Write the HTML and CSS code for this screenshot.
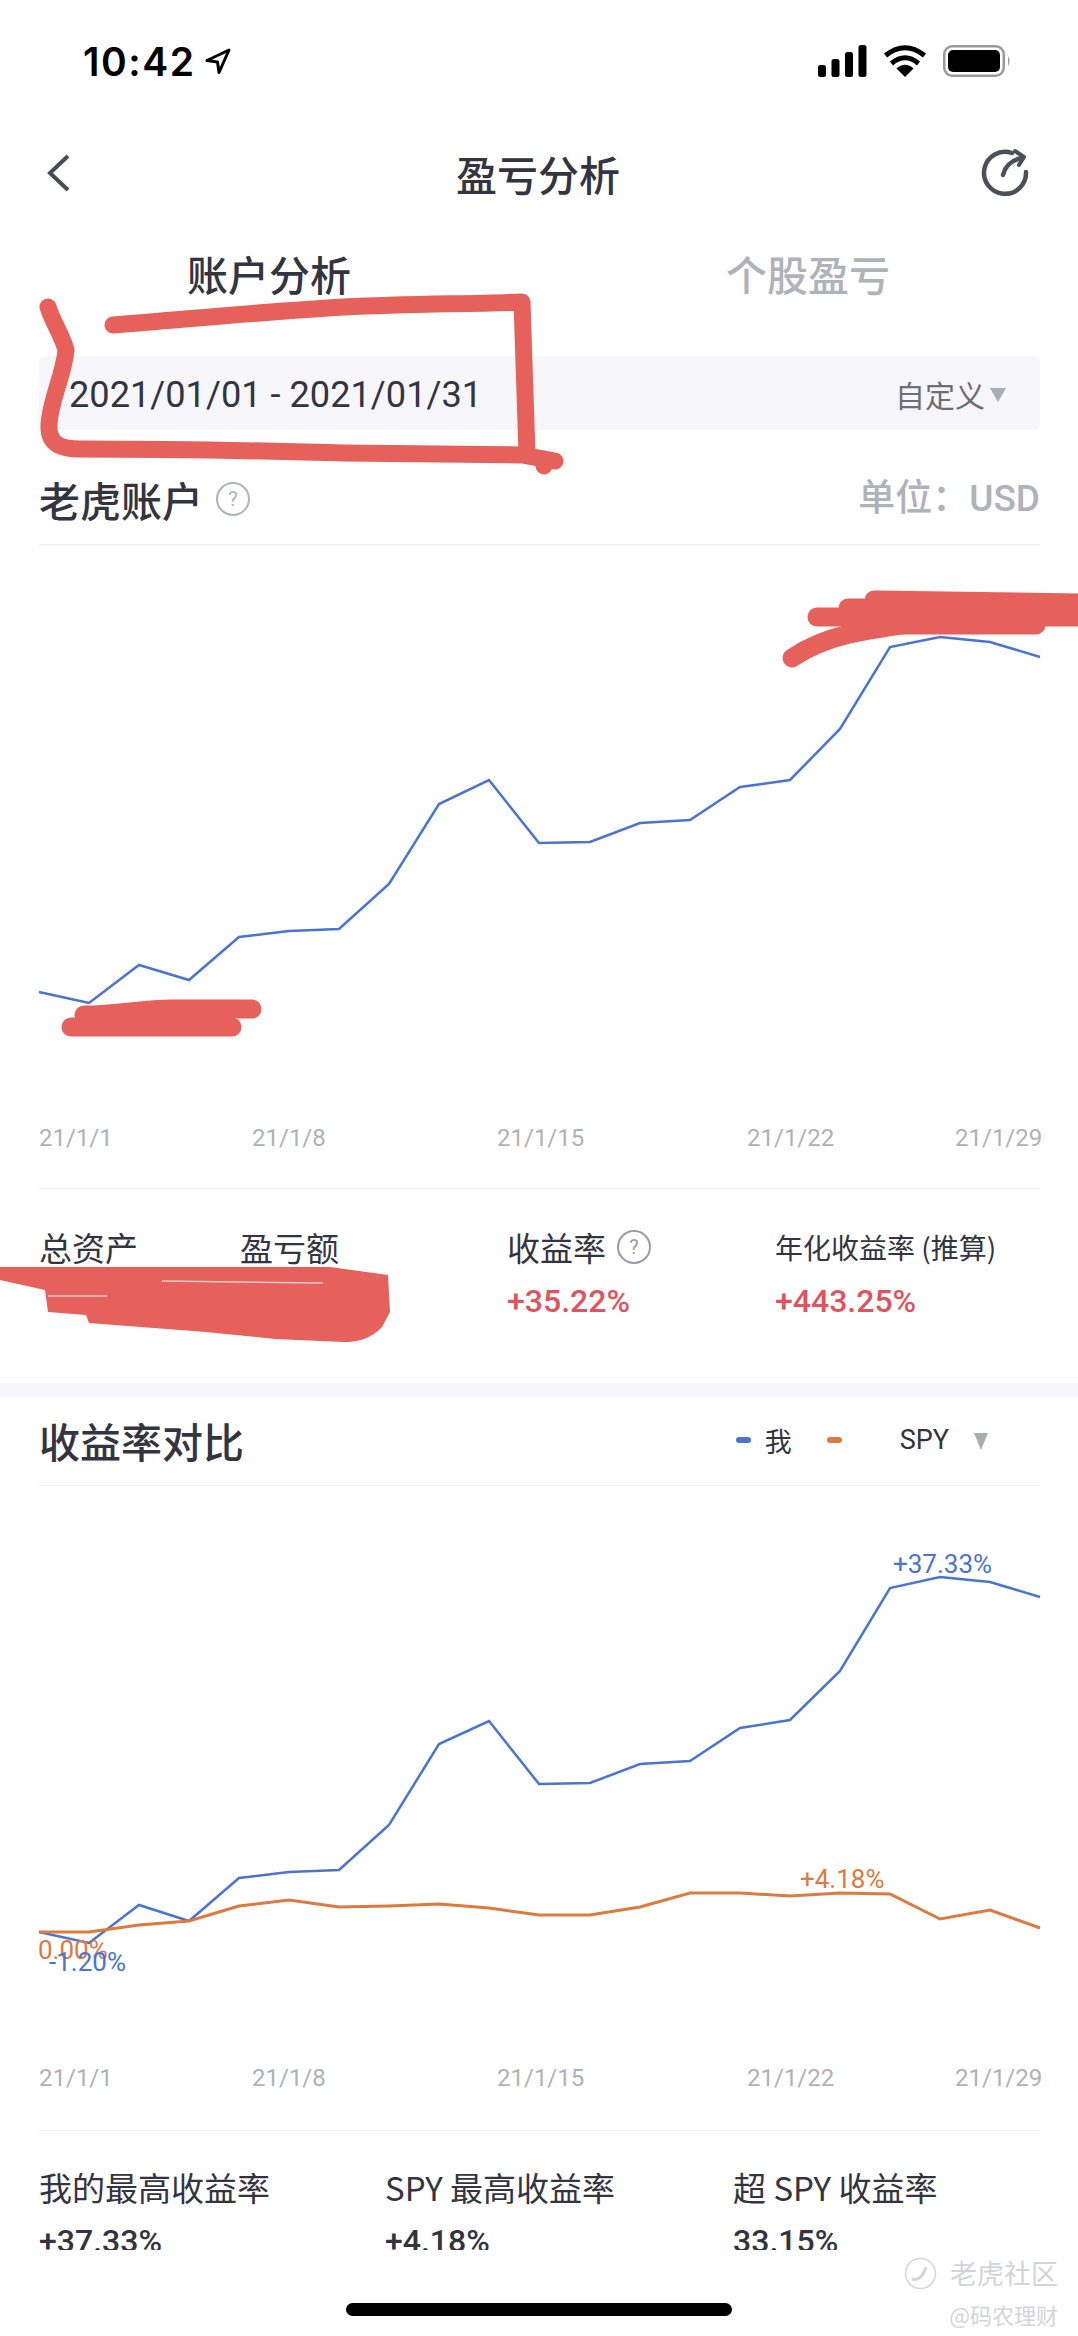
FILE: index.html
```html
<!DOCTYPE html>
<html lang="zh">
<head>
  <meta charset="UTF-8" />
  <title>盈亏分析</title>
  <link rel="stylesheet" href="styles.css">
</head>
<body>
<div class="phone">

  <!-- Status bar -->
  <div class="status">
    <div class="clock">
      <span class="time">10:42</span>
      <svg class="loc" width="28" height="28" viewBox="0 0 28 28"><path d="M25 3 3 13.500l10.500 1.500 1.500 10.500z" fill="none" stroke="#000" stroke-width="3" stroke-linejoin="round"/></svg>
    </div>
    <div class="status-icons">
      <svg width="49" height="32" viewBox="0 0 49 32"><rect x="0" y="20" width="8" height="12" rx="2.500"/><rect x="13.500" y="14" width="8" height="18" rx="2.500"/><rect x="27" y="7" width="8" height="25" rx="2.500"/><rect x="40.500" y="0" width="8" height="32" rx="2.500"/></svg>
      <svg width="44" height="32" viewBox="0 0 44 32"><path d="M22 32 13.500 23.500Q22 16 30.500 23.500z"/><path d="M8.500 18.500Q22 7 35.500 18.500" fill="none" stroke="#000" stroke-width="5"/><path d="M2.500 10.500Q22 -5 41.500 10.500" fill="none" stroke="#000" stroke-width="5"/></svg>
      <svg width="68" height="32" viewBox="0 0 68 32"><rect x="1.250" y="1.250" width="59.500" height="29.500" rx="8" fill="#fff" stroke="#9a9a9a" stroke-width="2.500"/><rect x="5" y="5" width="52" height="22" rx="5"/><path d="M65 11q3 5 0 10z" fill="#9a9a9a"/></svg>
    </div>
  </div>

  <!-- Navigation -->
  <div class="nav">
    <svg class="nav-back" width="26" height="38" viewBox="0 0 26 38"><path d="M22 2 4 19l18 17" fill="none" stroke="#4a4b57" stroke-width="4"/></svg>
    <div class="nav-title">盈亏分析</div>
    <svg class="nav-share" width="50" height="50" viewBox="0 0 50 50"><path d="M32 5A21 21 0 1 0 46 24" fill="none" stroke="#4d4e5a" stroke-width="4.500" stroke-linecap="round"/><path d="M23 27Q26 14 41 10" fill="none" stroke="#4d4e5a" stroke-width="4.500" stroke-linecap="round"/><path d="M35 3 44 9 39 17" fill="none" stroke="#4d4e5a" stroke-width="4" stroke-linejoin="round" stroke-linecap="round"/></svg>
  </div>

  <!-- Tabs -->
  <div class="tabs">
    <div class="tab tab-on">账户分析</div>
    <div class="tab">个股盈亏</div>
  </div>

  <div class="date-bar">
    <span class="date-range">2021/01/01 - 2021/01/31</span>
    <span class="date-type">自定义<i class="tri"></i></span>
  </div>

  <!-- Account section -->
  <div class="head">
    <div class="head-left">老虎账户<span class="help">?</span></div>
    <div class="unit">单位：USD</div>
  </div>

  <svg class="chart chart-one" viewBox="0 545 1078 643">
    <polyline class="line-blue" points="39,992 89,1003 139,965 189,980 239,937 289,931 339,929 389,884 439,804 489,780 539,843 590,842 640,823 690,820 740,787 790,780 840,729 890,647 940,637 990,642 1040,657"/>
    <text class="tick" x="39" y="1146">21/1/1</text>
    <text class="tick" x="252" y="1146">21/1/8</text>
    <text class="tick" x="497" y="1146">21/1/15</text>
    <text class="tick" x="747" y="1146">21/1/22</text>
    <text class="tick" x="955" y="1146">21/1/29</text>
  </svg>

  <div class="stats rule">
    <div class="stat">
      <div class="stat-label">总资产</div>
    </div>
    <div class="stat">
      <div class="stat-label">盈亏额</div>
    </div>
    <div class="stat">
      <div class="stat-label">收益率<span class="help help-dark">?</span></div>
      <div class="stat-value">+35.22%</div>
    </div>
    <div class="stat">
      <div class="stat-label stat-small">年化收益率 (推算)</div>
      <div class="stat-value">+443.25%</div>
    </div>
  </div>

  <div class="band"></div>

  <!-- Comparison section -->
  <div class="head head-two">
    <div class="head-left">收益率对比</div>
    <div class="legend">
      <i class="dash dash-blue"></i><span class="me">我</span>
      <i class="dash dash-orange"></i><span class="spy">SPY</span>
      <i class="tri tri-big"></i>
    </div>
  </div>

  <svg class="chart chart-two" viewBox="0 1486 1078 644">
    <polyline class="line-blue" points="39,1932 89,1943 139,1905 189,1921 239,1878 289,1872 339,1870 389,1825 439,1744 489,1721 539,1784 590,1783 640,1764 690,1761 740,1728 790,1720 840,1671 890,1588 940,1577 990,1582 1040,1597"/>
    <polyline class="line-orange" points="39,1932 89,1932 139,1925 189,1921 239,1906 289,1900 339,1907 389,1906 439,1904 489,1908 539,1915 590,1915 640,1907 690,1893 740,1893 790,1896 840,1893 890,1894 940,1919 990,1910 1040,1928"/>
    <text class="mark mark-blue" x="893" y="1573">+37.33%</text>
    <text class="mark mark-orange" x="800" y="1888">+4.18%</text>
    <text class="mark mark-orange" x="38" y="1959">0.00%</text>
    <text class="mark mark-blue" x="49" y="1971">-1.20%</text>
    <text class="tick" x="39" y="2086">21/1/1</text>
    <text class="tick" x="252" y="2086">21/1/8</text>
    <text class="tick" x="497" y="2086">21/1/15</text>
    <text class="tick" x="747" y="2086">21/1/22</text>
    <text class="tick" x="955" y="2086">21/1/29</text>
  </svg>

  <div class="summary rule">
    <div class="stat">
      <div class="stat-label">我的最高收益率</div>
      <div class="sum-value">+37.33%</div>
    </div>
    <div class="stat">
      <div class="stat-label">SPY 最高收益率</div>
      <div class="sum-value">+4.18%</div>
    </div>
    <div class="stat">
      <div class="stat-label">超 SPY 收益率</div>
      <div class="sum-value">33.15%</div>
    </div>
  </div>

  <div class="home-bar"></div>

  <!-- Watermark -->
  <div class="watermark">
    <div class="wm-top">
      <svg width="33" height="33" viewBox="0 0 33 33"><circle cx="16.500" cy="16.500" r="15" fill="none" stroke="#d6d6da" stroke-width="1.500"/><path d="M8 22q9 3 14-12" fill="none" stroke="#d6d6da" stroke-width="3"/></svg>
      <span>老虎社区</span>
    </div>
    <div class="wm-bottom">@码农理财</div>
  </div>

  <!-- Red marker scribbled over the screenshot -->
  <svg class="scribble" viewBox="0 0 1078 2336">
    <g class="pen">
      <path d="M113 325C200 318 260 312 344 307 410 304 470 304 522 302L527 454"/>
      <path d="M48 307 C54 325 62 335 66 350 64 375 50 400 49 425 48 445 62 449 80 449 200 449 270 451 344 453L522 455 555 461"/>
      <path d="M543 459 544 466"/>
      <path class="pen-fat" d="M84 1015C120 1015 140 1009 172 1009H252"/>
      <path class="pen-fat" d="M71 1027H232"/>
      <path class="pen-fat" d="M86 1020H150"/>
      <path class="pen-fat" d="M874 600 1085 603"/>
      <path class="pen-fat" d="M848 608H1085"/>
      <path class="pen-fat" d="M817 617H1085"/>
      <path class="pen-fat" d="M880 625H1036"/>
      <path class="pen-fat" d="M792 658C830 632 880 628 925 622"/>
    </g>
    <path class="blob" d="M0 1267H330L388 1275 390 1312 382 1327C370 1340 355 1342 344 1342L275 1339 206 1332 89 1323 86 1315 48 1312 45 1290 0 1280z"/>
    <path class="blob-gap" d="M162 1281 323 1283M48 1296H107"/>
  </svg>

</div>
</body>
</html>
```

FILE: styles.css
```css
/* General */
body {
  margin: 0;
  background: #fff;
  font-family: "Noto Sans CJK SC", sans-serif;
  color: #33343f;
}

.phone {
  position: relative;
  width: 1078px;
  height: 2336px;
  overflow: hidden;
}

/* Status bar */
.status {
  height: 122px;
  padding: 45px 67px 0 83px;
  box-sizing: border-box;
  display: flex;
  justify-content: space-between;
  align-items: flex-start;
}
.clock {
  display: flex;
  align-items: center;
  gap: 9px;
  height: 32px;
}
.time {
  font-family: Inter, sans-serif;
  font-size: 39px;
  font-weight: 600;
  letter-spacing: 1.500px;
  color: #000;
}
.status-icons {
  display: flex;
  gap: 16px;
}

/* Nav */
.nav {
  height: 102px;
  padding: 0 48px 0 46px;
  display: grid;
  grid-template-columns: 1fr auto 1fr;
  align-items: center;
}
.nav-title {
  font-size: 41px;
  font-weight: 500;
  line-height: 56px;
}
.nav-share {
  justify-self: end;
}

/* Tabs */
.tabs {
  height: 104px;
  padding-bottom: 6px;
  box-sizing: border-box;
  display: grid;
  grid-template-columns: 538px 540px;
  align-items: center;
  justify-items: center;
}
.tab {
  font-size: 41px;
  font-weight: 500;
  line-height: 56px;
  color: #b0b2bb;
}
.tab-on {
  color: #33343f;
}

/* Date filter */
.date-bar {
  height: 74px;
  margin: 28px 38px 0 39px;
  padding: 2px 34px 0 30px;
  box-sizing: border-box;
  background: #f7f7fb;
  border-radius: 6px;
  display: flex;
  justify-content: space-between;
  align-items: center;
}
.date-range {
  font-family: Roboto, sans-serif;
  font-size: 36.200px;
}
.date-type {
  font-size: 30px;
  color: #6d6e78;
  display: flex;
  align-items: center;
  gap: 5px;
}
.tri {
  width: 0;
  height: 0;
  margin-top: 2px;
  border-left: 8px solid transparent;
  border-right: 8px solid transparent;
  border-top: 14px solid #aaabb3;
}

/* Section headers */
.head {
  height: 115px;
  margin: 0 38px 0 39px;
  padding-top: 40px;
  box-sizing: border-box;
  border-bottom: 1px solid #f0f0f2;
  display: flex;
  justify-content: space-between;
  align-items: flex-start;
}
.head-two {
  height: 89px;
  padding-top: 14px;
}
.head-left {
  font-size: 41px;
  font-weight: 500;
  line-height: 58px;
  display: flex;
  align-items: center;
}
.unit {
  font-family: Roboto, "Noto Sans CJK SC", sans-serif;
  font-size: 37px;
  font-weight: 500;
  line-height: 58px;
  color: #b0b2bb;
}
.help {
  width: 30px;
  height: 30px;
  margin-left: 13px;
  border: 2.500px solid #b0b2bb;
  border-radius: 50%;
  font-family: Roboto, sans-serif;
  font-size: 20px;
  font-weight: 400;
  line-height: 30px;
  text-align: center;
  color: #b0b2bb;
}
.help-dark {
  margin-left: 11px;
  border-color: #9a9ba3;
  color: #9a9ba3;
}

/* Charts */
.chart {
  display: block;
  width: 1078px;
}
.chart-one {
  height: 643px;
}
.chart-two {
  height: 644px;
}
.line-blue,
.line-orange {
  fill: none;
  stroke-width: 2.500px;
}
.line-blue {
  stroke: #4a74d0;
}
.line-orange {
  stroke: #dd7a3f;
  stroke-width: 3px;
}
.tick {
  font-family: Roboto, sans-serif;
  font-size: 24px;
  fill: #b0b1b8;
}
.mark {
  font-family: Roboto, sans-serif;
  font-size: 26px;
}
.mark-blue {
  fill: #4a74d0;
}
.mark-orange {
  fill: #dd7a3f;
}

/* Stat rows */
.rule {
  margin: 0 38px 0 39px;
  border-top: 1px solid #f0f0f2;
}
.stats {
  height: 195px;
  padding-top: 36px;
  box-sizing: border-box;
  display: grid;
  grid-template-columns: 201px 267px 268px 1fr;
}
.stat-label {
  font-size: 33px;
  line-height: 44px;
  display: flex;
  align-items: center;
}
.stat-small {
  font-size: 28px;
}
.stat-value {
  margin-top: 10px;
  font-family: Roboto, sans-serif;
  font-size: 32px;
  font-weight: 500;
  line-height: 44px;
  color: #e0535d;
}
.band {
  height: 14px;
  background: #f7f7fa;
}

/* Legend */
.legend {
  display: flex;
  align-items: center;
  height: 58px;
  font-size: 27px;
  margin-right: 52px;
}
.dash {
  width: 15px;
  height: 6px;
  border-radius: 3px;
}
.dash-blue {
  background: #4a74d0;
}
.dash-orange {
  background: #dd7a3f;
  margin-left: 35px;
}
.me {
  margin-left: 14px;
}
.spy {
  font-family: Roboto, sans-serif;
  margin-left: 58px;
}
.tri-big {
  margin-left: 25px;
  border-top-width: 17px;
  border-left-width: 7.500px;
  border-right-width: 7.500px;
}

/* Bottom summary, cut off by the screen */
.summary {
  height: 120px;
  padding-top: 34px;
  box-sizing: border-box;
  overflow: hidden;
  display: grid;
  grid-template-columns: 346px 348px 1fr;
}
.sum-value {
  margin-top: 10px;
  font-family: Roboto, sans-serif;
  font-size: 32px;
  font-weight: 500;
  line-height: 44px;
}

.home-bar {
  width: 386px;
  height: 13px;
  margin: 53px auto 0;
  background: #000;
  border-radius: 7px;
}

/* Watermark */
.watermark {
  position: absolute;
  right: 20px;
  top: 2252px;
  color: #d4d4d8;
  text-align: right;
}
.wm-top {
  display: flex;
  align-items: center;
  gap: 13px;
  font-size: 27px;
  line-height: 42px;
}
.wm-bottom {
  margin-top: 5px;
  font-size: 22px;
  line-height: 30px;
}

/* Marker overlay */
.scribble {
  position: absolute;
  left: 0;
  top: 0;
  width: 1078px;
  height: 2336px;
  pointer-events: none;
}
.pen {
  fill: none;
  stroke: #e6605c;
  stroke-width: 17px;
  stroke-linecap: round;
  stroke-linejoin: round;
}
.pen-fat {
  stroke-width: 19px;
}
.blob {
  fill: #e6605c;
}
.blob-gap {
  fill: none;
  stroke: #f6c9c6;
  stroke-width: 1.500px;
}
```
